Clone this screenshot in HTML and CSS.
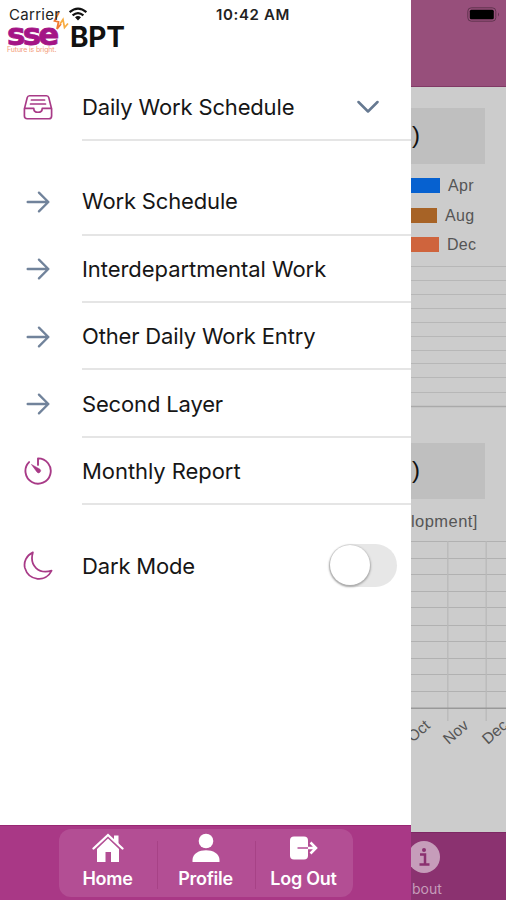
FILE: index.html
```html
<!DOCTYPE html>
<html lang="en">
<head>
<meta charset="utf-8">
<meta name="viewport" content="width=device-width">
<title>BPT</title>
<link rel="stylesheet" href="styles.css">
</head>
<body>
<div class="app">
  <aside class="drawer">
    <header class="brand">
      <div class="logo">
        <span class="logo-name">sse</span>
        <span class="logo-tag">Future is bright.</span>
        <svg class="spark" viewBox="0 0 16 20"><path d="M6 0 1.500 9l4 1-1.500 7 4-5" fill="none" stroke="#f07a32" stroke-width="1.800"/><path d="m7 12 3-4.500 1.500 8 3.500-4" fill="none" stroke="#f8ad42" stroke-width="1.700"/></svg>
      </div>
      <h1 class="title">BPT</h1>
    </header>
    <nav class="menu">
      <div class="item">
        <svg class="icon" viewBox="0 0 32 32"><g fill="none" stroke="#a83a87" stroke-width="1.8" stroke-linejoin="round" stroke-linecap="round"><path d="M7 4h18q2 0 2.500 2L30.500 18v7.500q0 3-3 3h-23q-3 0-3-3V18L4.500 6q.5-2 2.500-2zM1.500 17.500h10c0 5.500 9 5.500 9 0h10M9 8.500h14M8 12.800h16"/></g></svg>
        <div class="label first">Daily Work Schedule<svg class="chevron" viewBox="0 0 22 14"><path d="m1.500 2 9.500 9.500L20.500 2" fill="none" stroke="#667991" stroke-width="2.500" stroke-linecap="round" stroke-linejoin="round"/></svg></div>
      </div>
      <div class="item gap">
        <svg class="icon arrow" viewBox="0 0 32 32"><path d="M5 16h22M17 6l10 10-10 10"/></svg>
        <div class="label">Work Schedule</div>
      </div>
      <div class="item">
        <svg class="icon arrow" viewBox="0 0 32 32"><path d="M5 16h22M17 6l10 10-10 10"/></svg>
        <div class="label wide">Interdepartmental Work</div>
      </div>
      <div class="item">
        <svg class="icon arrow" viewBox="0 0 32 32"><path d="M5 16h22M17 6l10 10-10 10"/></svg>
        <div class="label">Other Daily Work Entry</div>
      </div>
      <div class="item">
        <svg class="icon arrow" viewBox="0 0 32 32"><path d="M5 16h22M17 6l10 10-10 10"/></svg>
        <div class="label">Second Layer</div>
      </div>
      <div class="item">
        <svg class="icon" viewBox="0 0 32 32"><path d="M16 9.500V2.500A13.500 13.500 0 1 1 6.500 6.500" fill="none" stroke="#a83a87" stroke-width="2" stroke-linecap="round" stroke-linejoin="round"/><path d="m9 9 9.200 5.200a2.100 2.100 0 1 1-3.200 3z" fill="#a83a87" stroke="#a83a87" stroke-width=".6"/></svg>
        <div class="label wide">Monthly Report</div>
      </div>
      <div class="item gap">
        <svg class="icon" viewBox="0 0 32 32"><path d="M10.500 1.500C3.500 5 .5 11.500 2 18c4 14 22.500 16 28.500 3C17 25 6.500 16 10.500 1.500z" fill="none" stroke="#a83a87" stroke-width="1.900" stroke-linejoin="round"/></svg>
        <div class="label plain">Dark Mode<span class="switch"><span class="knob"></span></span></div>
      </div>
    </nav>
    <footer class="tabs">
      <div class="tab-group">
        <div class="tab">
          <svg class="tab-icon" viewBox="0 0 32 30"><path d="M1.500 15.500 16 2l14.500 13.500" fill="none" stroke="#fff" stroke-width="2.300" stroke-linecap="round"/><path d="M22 2.500h4.500v9L22 7.500zM16 5.500 27 16v13h-8V19h-5.500v10H5V16z" fill="#fff"/></svg>
          <span>Home</span>
        </div>
        <div class="tab">
          <svg class="tab-icon" viewBox="0 0 32 30"><circle cx="16" cy="8" r="7.300" fill="#fff"/><path d="M2.500 29v-2C2.500 14 29.500 14 29.500 27v2z" fill="#fff"/></svg>
          <span>Profile</span>
        </div>
        <div class="tab">
          <svg class="tab-icon" viewBox="0 0 32 30"><rect x="2" y="3.500" width="18" height="23" rx="4" fill="#fff"/><path d="M9.500 15h11" stroke="#c06aa8" stroke-width="1.800"/><path d="M20 15h8M22.500 9.500l5.500 5.500-5.500 5.500" fill="none" stroke="#fff" stroke-width="2.500"/></svg>
          <span>Log Out</span>
        </div>
      </div>
    </footer>
  </aside>
  <main class="page">
    <div class="toolbar"></div>
    <section class="report">
      <div class="heading">)</div>
      <ul class="legend">
        <li><i class="swatch apr"></i>Apr</li>
        <li><i class="swatch aug"></i>Aug</li>
        <li><i class="swatch dec"></i>Dec</li>
      </ul>
      <svg class="chart-a" viewBox="0 0 95 143"><path d="M0 1.500h95M0 15.500h95M0 29.500h95M0 43.500h95M0 57.500h95M0 71.500h95M0 85.500h95M0 98.500h95M0 112.500h95M0 127.500h95" stroke="#b7b7b7"/><path d="M0 141.500h95" stroke="#aaa" stroke-width="1.500"/></svg>
    </section>
    <section class="report second">
      <div class="heading">)</div>
      <p class="caption">lopment]</p>
      <svg class="chart-b" viewBox="0 0 95 220"><path d="M0 .5h95M0 17.500h95M0 33.500h95M0 50.500h95M0 66.500h95M0 84.500h95M0 100.500h95M0 117.500h95M0 133.500h95M0 150.500h95" stroke="#b1b1b1"/><path d="M36.800 0v180M75.200 0v180" stroke="#b9b9b9" stroke-width="1.300"/><path d="M0 167.300h95" stroke="#999" stroke-width="1.500"/>
        <g fill="#555" font-size="15.500" text-anchor="end"><text transform="translate(20 186) rotate(-41)">Oct</text><text transform="translate(58.500 186) rotate(-41)">Nov</text><text transform="translate(97.500 186) rotate(-41)">Dec</text></g></svg>
    </section>
    <div class="page-tabs">
      <svg class="info" viewBox="0 0 32 32"><circle cx="16" cy="16" r="16" fill="#c69dba"/><circle cx="16" cy="9" r="2" fill="#8b3270"/><path d="M12 13.500h5V23M11.500 23.500h10" fill="none" stroke="#8b3270" stroke-width="2.500"/></svg>
      <span>bout</span>
    </div>
  </main>
  <div class="status">
    <span class="carrier">Carrier</span>
    <svg class="wifi" viewBox="0 0 20 15"><path d="M1 5.500Q10-2 19 5.500M4.200 9q5.800-5 11.600 0" fill="none" stroke="#111" stroke-width="2.300"/><path d="m6.800 11 3.200 3.500 3.200-3.500q-3.200-2.500-6.400 0z" fill="#111"/></svg>
    <span class="time">10:42 AM</span>
    <svg class="battery" viewBox="0 0 33 15"><rect x=".8" y=".8" width="28" height="13.400" rx="3.500" fill="none" stroke="#61344f"/><rect x="2.800" y="2.800" width="24" height="9.400" rx="1.500" fill="#000"/><path d="M31 5.500q2 2 0 4z" fill="#61344f"/></svg>
  </div>
</div>
</body>
</html>
```
FILE: styles.css
```css
* { box-sizing: border-box; }
body { margin: 0; font-family: Inter, "Liberation Sans", sans-serif; }
h1, p, ul { margin: 0; padding: 0; }
svg { display: block; flex: none; }
.app { position: relative; display: grid; grid-template-columns: 411px 95px; width: 506px; height: 900px; overflow: hidden; }
.drawer { display: flex; flex-direction: column; background: #fff; min-width: 0; }
.brand { display: flex; height: 73.8px; padding: 20px 0 0 7px; }
.logo { position: relative; width: 63px; display: flex; flex-direction: column; }
.logo-name { height: 26px; font-family: "DejaVu Sans", sans-serif; font-size: 31px; line-height: 28px; font-weight: 700; letter-spacing: -2.8px; color: #a41486; -webkit-text-stroke: .8px #a41486; }
.logo-tag { font-size: 7px; line-height: 8px; color: #f39b78; white-space: nowrap; letter-spacing: -.15px; }
.spark { position: absolute; left: 46px; top: -8px; width: 16px; height: 20px; }
.title { font-size: 28px; line-height: 35px; font-weight: 700; color: #111; letter-spacing: -.2px; }
.menu { flex: 1; }
.item { display: flex; align-items: center; height: 67.4px; padding-left: 23px; }
.gap { margin-top: 27px; }
.icon { width: 30px; height: 30px; margin-right: 29px; }
.arrow { fill: none; stroke: #71839b; stroke-width: 2.5; stroke-linecap: round; stroke-linejoin: round; }
.label { flex: 1; align-self: stretch; display: flex; align-items: center; justify-content: space-between; padding: 1px 32px 0 0; border-bottom: 2px solid #e5e5e5; font-size: 22px; letter-spacing: -.16px; color: #161616; white-space: nowrap; }
.wide { letter-spacing: -.06px; }
.plain { border: 0; padding: 0 14px 0 0; }
.chevron { width: 22px; height: 14px; }
.switch { width: 68px; height: 43px; padding: 1px; border-radius: 22px; background: #e7e7e7; }
.knob { display: block; width: 40px; height: 40px; border-radius: 50%; background: #fff; box-shadow: 0 1px 2px 1px #aaa; }
.tabs { display: flex; justify-content: center; height: 75px; padding-top: 3px; background: #a93886; border-top: 1px solid #982873; }
.tab-group { display: grid; grid-template-columns: repeat(3, 98px); width: 294px; height: 68px; border-radius: 12px; background: #b34e94; }
.tab { display: flex; flex-direction: column; align-items: center; padding-top: 4px; color: #fff; font-size: 18px; letter-spacing: -.25px; line-height: 22px; font-weight: 600; }
.tab + .tab { background: linear-gradient(#a74286, #a74286) 0 12px / 1px 48px no-repeat; }
.tab-icon { width: 32px; height: 30px; margin-bottom: 5px; }
.page { display: flex; flex-direction: column; background: #ccc; overflow: hidden; font-family: "Liberation Sans", sans-serif; color: #555; }
.toolbar { height: 87px; background: #974f7b; border-bottom: 1px solid #813965; }
.report { height: 321px; padding-top: 21px; }
.heading { width: 74px; height: 56px; background: #bfbfbf; font-size: 24px; line-height: 54px; color: #111; padding-left: 1px; }
.legend { list-style: none; margin-top: 6.5px; }
.legend li { display: flex; align-items: center; height: 29.7px; padding-top: 1px; font-size: 16px; letter-spacing: .3px; gap: 8px; }
.swatch { height: 15px; margin-top: -1px; }
.apr { width: 29px; background: #0661d0; }
.aug { width: 26px; background: #a76326; }
.dec { width: 28px; background: #cf643d; }
.chart-a { width: 95px; height: 143px; margin-top: 5.4px; }
.second { height: 424px; padding-top: 35px; }
.caption { height: 42px; padding-top: 12px; font-size: 16.5px; line-height: 20px; letter-spacing: .45px; }
.chart-b { width: 95px; height: 220px; overflow: visible; }
.page-tabs { flex: 1; background: #8b3270; border-top: 1px solid #7d2864; color: #c69dba; padding-top: 8px; }
.info { width: 32px; height: 32px; margin: 0 0 7px -3px; }
.page-tabs span { display: block; padding-left: 1px; line-height: 18px; font-family: Inter, sans-serif; font-size: 14px; }
.status { position: absolute; inset: 0 0 auto; height: 28px; display: grid; grid-template-columns: 59px 148px 1fr 39.5px; align-items: center; padding-left: 9px; font-size: 15px; color: #222; }
.carrier { letter-spacing: .3px; }
.wifi { width: 20px; height: 14px; }
.time { font-weight: 600; letter-spacing: .65px; }
.battery { width: 33px; height: 15px; }
```
